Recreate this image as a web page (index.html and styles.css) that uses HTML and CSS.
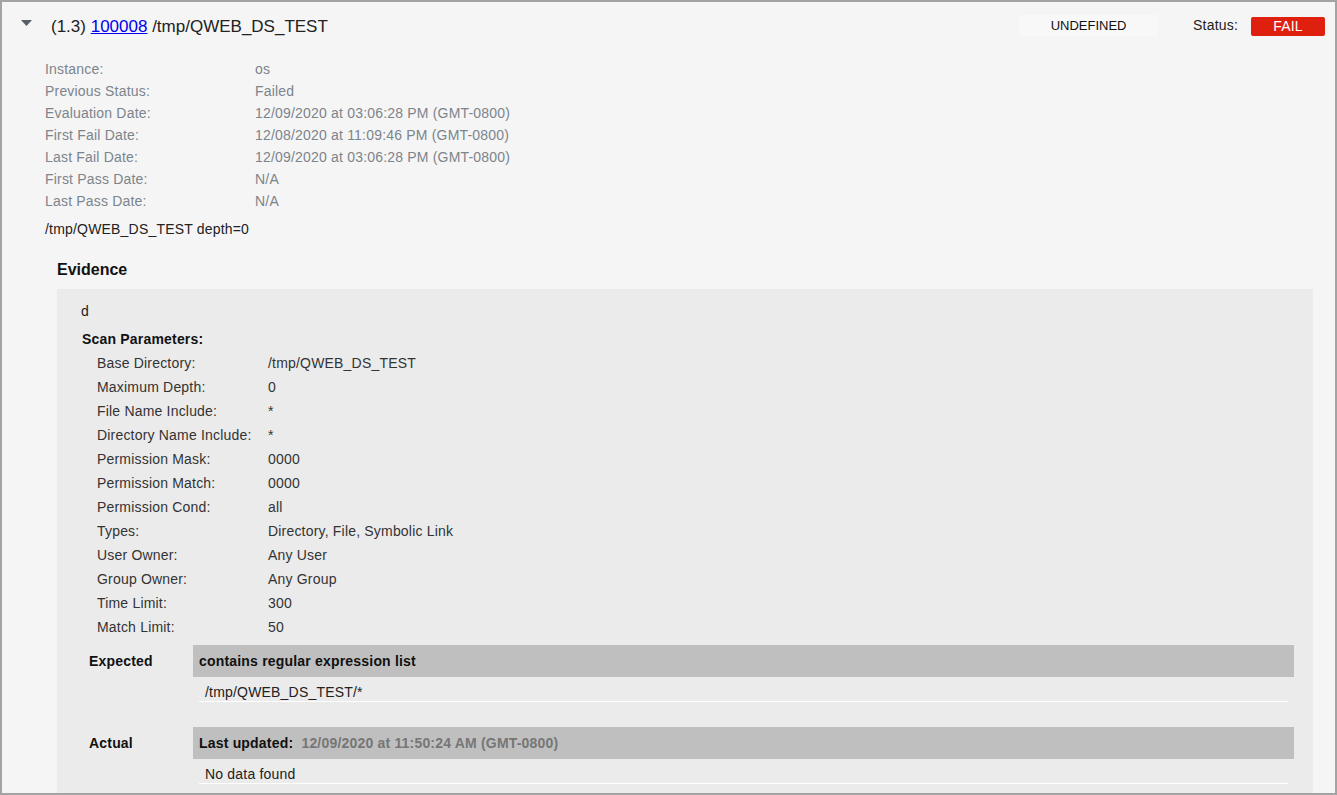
FILE: index.html
```html
<!DOCTYPE html>
<html>
<head>
<meta charset="utf-8">
<link rel="stylesheet" href="styles.css">
</head>
<body>
<div class="frame">
  <div class="header">
    <div class="title-group">
      <svg class="caret" width="11" height="6" viewBox="0 0 11 6"><polygon points="0,0 11,0 5.5,6" fill="#575f69"/></svg>
      <span class="title">(1.3) <a href="#" class="link">100008</a> /tmp/QWEB_DS_TEST</span>
    </div>
    <div class="right-group">
      <div class="undefined">UNDEFINED</div>
      <span class="status-label">Status:</span>
      <span class="badge">FAIL</span>
    </div>
  </div>

  <div class="details">
    <span>Instance:</span><span>os</span>
    <span>Previous Status:</span><span>Failed</span>
    <span>Evaluation Date:</span><span>12/09/2020 at 03:06:28 PM (GMT-0800)</span>
    <span>First Fail Date:</span><span>12/08/2020 at 11:09:46 PM (GMT-0800)</span>
    <span>Last Fail Date:</span><span>12/09/2020 at 03:06:28 PM (GMT-0800)</span>
    <span>First Pass Date:</span><span>N/A</span>
    <span>Last Pass Date:</span><span>N/A</span>
  </div>

  <div class="depth">/tmp/QWEB_DS_TEST depth=0</div>

  <div class="evidence">
    <h3 class="evidence-title">Evidence</h3>
    <div class="evidence-box">
      <div class="ev-d">d</div>
      <div class="scan-title">Scan Parameters:</div>
      <div class="params">
        <span>Base Directory:</span><span>/tmp/QWEB_DS_TEST</span>
        <span>Maximum Depth:</span><span>0</span>
        <span>File Name Include:</span><span>*</span>
        <span>Directory Name Include:</span><span>*</span>
        <span>Permission Mask:</span><span>0000</span>
        <span>Permission Match:</span><span>0000</span>
        <span>Permission Cond:</span><span>all</span>
        <span>Types:</span><span>Directory, File, Symbolic Link</span>
        <span>User Owner:</span><span>Any User</span>
        <span>Group Owner:</span><span>Any Group</span>
        <span>Time Limit:</span><span>300</span>
        <span>Match Limit:</span><span>50</span>
      </div>

      <div class="result">
        <div class="result-label">Expected</div>
        <div class="result-body">
          <div class="result-head">contains regular expression list</div>
          <div class="result-value">/tmp/QWEB_DS_TEST/*</div>
        </div>
      </div>

      <div class="result actual">
        <div class="result-label">Actual</div>
        <div class="result-body">
          <div class="result-head">Last updated:&nbsp; <span class="updated">12/09/2020 at 11:50:24 AM (GMT-0800)</span></div>
          <div class="result-value">No data found</div>
        </div>
      </div>
    </div>
  </div>
</div>
</body>
</html>
```

FILE: styles.css
```css
html, body {
  margin: 0;
  padding: 0;
  background: #f5f5f5;
}

body {
  font-family: "Liberation Sans", Arial, sans-serif;
  font-size: 14px;
  letter-spacing: 0.19px;
  color: #222;
}

.frame {
  box-sizing: border-box;
  width: 1337px;
  height: 795px;
  border: 2px solid #a3a3a3;
  background: #f5f5f5;
  overflow: hidden;
}

.header {
  display: flex;
  align-items: center;
  justify-content: space-between;
  height: 48px;
  padding: 0 10px 0 19px;
}

.title-group {
  display: flex;
  align-items: center;
  gap: 19px;
  margin-top: 2px;
}

.caret {
  display: block;
  margin-top: -8px;
}

.title {
  font-size: 17px;
  letter-spacing: 0;
  color: #222;
}

.link {
  color: #0000ee;
  text-decoration: underline;
}

.right-group {
  display: flex;
  align-items: center;
}

.undefined {
  width: 139px;
  height: 21px;
  line-height: 21px;
  text-align: center;
  background: #f8f8f8;
  font-size: 13px;
  letter-spacing: 0;
  color: #111;
  margin-top: -2px;
}

.status-label {
  margin-left: 35px;
  margin-right: 13px;
  font-size: 14px;
  color: #222;
  margin-top: -2px;
}

.badge {
  width: 74px;
  height: 19px;
  line-height: 19px;
  text-align: center;
  background: #e0200f;
  color: #fff;
  border-radius: 2px;
  font-size: 14px;
}

.details {
  display: grid;
  grid-template-columns: 210px auto;
  justify-content: start;
  padding: 8px 0 0 43px;
  line-height: 22px;
  color: #7c848c;
}

.depth {
  margin: 6px 0 0 43px;
  line-height: 22px;
  color: #222;
}

.evidence {
  margin: 19px 22px 0 55px;
}

.evidence-title {
  margin: 0 0 10px 0;
  padding-top: 1px;
  height: 19px;
  font-size: 16px;
  line-height: 20px;
  font-weight: bold;
  letter-spacing: 0;
  color: #111;
}

.evidence-box {
  background: #ebebeb;
  padding: 11px 19px 60px 24px;
}

.ev-d {
  line-height: 22px;
  color: #222;
}

.scan-title {
  margin-top: 5px;
  margin-left: 1px;
  line-height: 24px;
  font-weight: bold;
  color: #111;
}

.params {
  display: grid;
  grid-template-columns: 171px auto;
  justify-content: start;
  margin-left: 16px;
  line-height: 24px;
  color: #333;
}

.result {
  display: grid;
  grid-template-columns: 104px 1fr;
  margin: 6px 0 0 8px;
}

.result.actual {
  margin-top: 25px;
}

.result-label {
  height: 32px;
  line-height: 32px;
  font-weight: bold;
  color: #111;
}

.result-head {
  height: 32px;
  line-height: 32px;
  padding-left: 6px;
  background: #bfbfbf;
  font-weight: bold;
  color: #111;
}

.updated {
  color: #767676;
}

.result-value {
  margin: 0 6px;
  padding: 5px 0 0 6px;
  height: 19px;
  line-height: 20px;
  border-bottom: 1px solid #ffffff;
  color: #222;
}
```
